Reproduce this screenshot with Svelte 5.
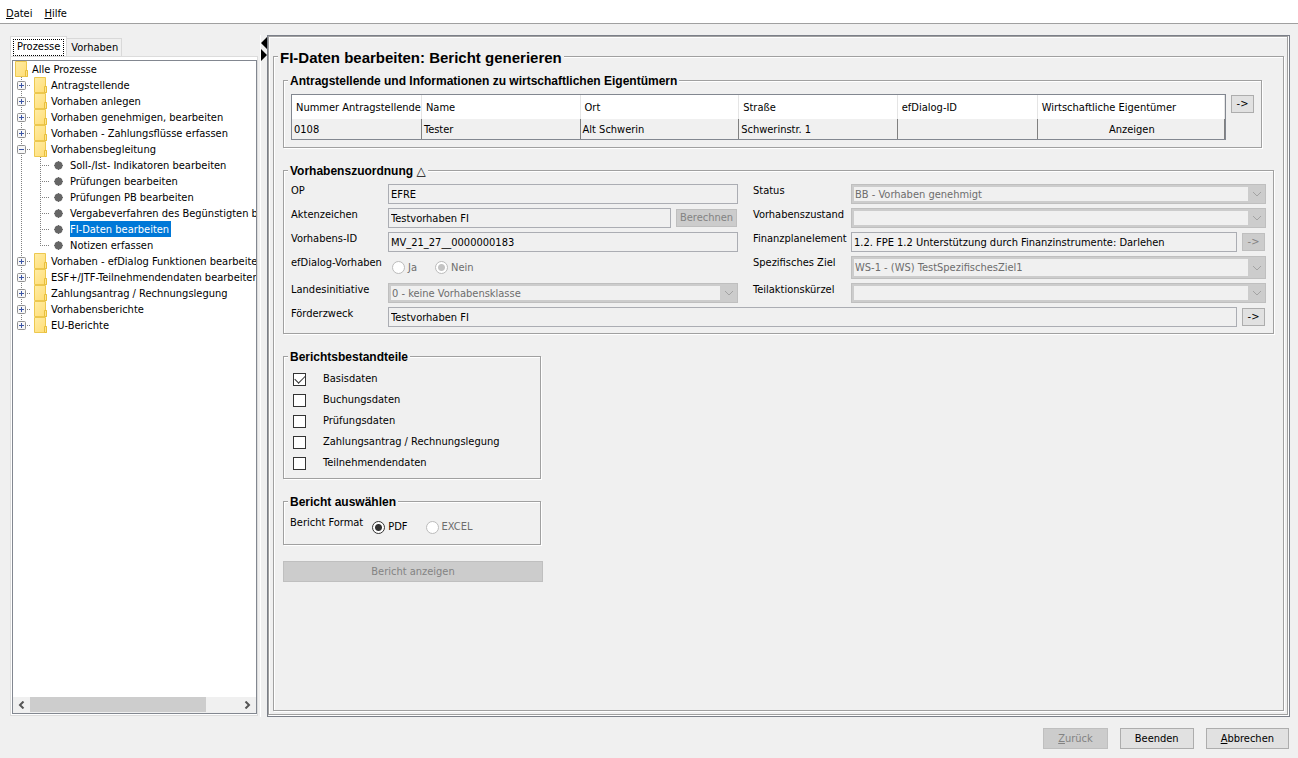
<script>
  const tree = [
    { label: 'Antragstellende' },
    { label: 'Vorhaben anlegen' },
    { label: 'Vorhaben genehmigen, bearbeiten' },
    { label: 'Vorhaben - Zahlungsflüsse erfassen' },
    {
      label: 'Vorhabensbegleitung',
      children: [
        'Soll-/Ist- Indikatoren bearbeiten',
        'Prüfungen bearbeiten',
        'Prüfungen PB bearbeiten',
        'Vergabeverfahren des Begünstigten bearbeiten',
        'FI-Daten bearbeiten',
        'Notizen erfassen'
      ]
    },
    { label: 'Vorhaben - efDialog Funktionen bearbeiten' },
    { label: 'ESF+/JTF-Teilnehmendendaten bearbeiten' },
    { label: 'Zahlungsantrag / Rechnungslegung' },
    { label: 'Vorhabensberichte' },
    { label: 'EU-Berichte' }
  ];

  let open = $state({ Vorhabensbegleitung: true });
  let selected = $state('FI-Daten bearbeiten');
  let tab = $state('Prozesse');

  let parts = $state([
    { id: 'basis', label: 'Basisdaten', checked: true },
    { id: 'buchung', label: 'Buchungsdaten', checked: false },
    { id: 'pruefung', label: 'Prüfungsdaten', checked: false },
    { id: 'zahlung', label: 'Zahlungsantrag / Rechnungslegung', checked: false },
    { id: 'teilnehmende', label: 'Teilnehmendendaten', checked: false }
  ]);
</script>

{#snippet folder()}
  <svg class="folder" width="13" height="16" viewBox="0 0 13 16" aria-hidden="true">
    <defs>
      <linearGradient id="paper" x1="0" y1="0" x2="1" y2="1">
        <stop offset="0" stop-color="#ffeda6" />
        <stop offset="1" stop-color="#ffdc73" />
      </linearGradient>
    </defs>
    <path d="M.5 .5h11v9h1v6h-12z" fill="url(#paper)" stroke="#edc84f" />
    <path d="M10.5 15.500V9.500h2v6z" fill="#ffe48c" stroke="#e8bf3c" />
  </svg>
{/snippet}

{#snippet combo(id, value)}
  <span class="combo">
    <select {id} disabled>
      <option>{value}</option>
    </select>
    <svg width="17" height="16" viewBox="0 0 17 16" aria-hidden="true">
      <path d="M5 6l4 4 4-4" fill="none" stroke="#a3a3a3" />
    </svg>
  </span>
{/snippet}

<div class="window">
  <nav class="menubar">
    <a href="#datei"><u>D</u>atei</a>
    <a href="#hilfe"><u>H</u>ilfe</a>
  </nav>

  <div class="body">
    <aside>
      <div class="tabs" role="tablist">
        {#each ['Prozesse', 'Vorhaben'] as name}
          <button class="tab" class:active={tab === name} role="tab" aria-selected={tab === name} onclick={() => (tab = name)}>
            <span>{name}</span>
          </button>
        {/each}
      </div>
      <div class="tabpanel">
        <div class="treebox">
          <div class="tree">
            <div class="node">{@render folder()}<span class="root">Alle Prozesse</span></div>
            <ul>
              {#each tree as item}
                <li>
                  <div class="node">
                    <button
                      class="expander"
                      aria-label={item.label}
                      aria-expanded={!!open[item.label]}
                      onclick={() => (open[item.label] = !open[item.label])}
                    >
                      <svg width="9" height="9" viewBox="0 0 9 9" aria-hidden="true">
                        <rect x=".5" y=".5" width="8" height="8" rx="1" fill="#f7f7f7" stroke="#919191" />
                        <path d={open[item.label] ? 'M2 4.500h5' : 'M2 4.500h5M4.500 2v5'} stroke="#3c55a5" />
                      </svg>
                    </button>
                    {@render folder()}
                    <span>{item.label}</span>
                  </div>
                  {#if item.children && open[item.label]}
                    <ul>
                      {#each item.children as child}
                        <li>
                          <div class="node leaf">
                            <svg class="dot" width="13" height="16" viewBox="0 0 13 16" aria-hidden="true">
                              <circle cx="5.500" cy="8.500" r="4" fill="#666" />
                              <path d="M5.500 4v9M1 8.500h9" stroke="#666" />
                            </svg>
                            <button class="entry" class:selected={selected === child} onclick={() => (selected = child)}>{child}</button>
                          </div>
                        </li>
                      {/each}
                    </ul>
                  {/if}
                </li>
              {/each}
            </ul>
          </div>
          <div class="scrollbar">
            <button aria-label="Nach links">
              <svg width="7" height="8" viewBox="0 0 7 8"><path d="M5.500 .5L2 4l3.500 3.500" fill="none" stroke="#555" stroke-width="2" /></svg>
            </button>
            <div class="track"><div class="thumb"></div></div>
            <button aria-label="Nach rechts">
              <svg width="7" height="8" viewBox="0 0 7 8"><path d="M1.500 .5L5 4 1.500 7.500" fill="none" stroke="#555" stroke-width="2" /></svg>
            </button>
          </div>
        </div>
      </div>
    </aside>

    <div class="splitter">
      <svg width="6" height="28" viewBox="0 0 6 28" aria-hidden="true">
        <path d="M6 2v12L0 8zM0 14v12l6-6z" />
      </svg>
    </div>

    <main>
      <div class="pane etched">
        <fieldset class="outer etched">
          <legend class="title">FI-Daten bearbeiten: Bericht generieren</legend>
          <div class="content">
            <fieldset class="applicants etched">
              <legend>Antragstellende und Informationen zu wirtschaftlichen Eigentümern</legend>
              <div class="applicants-row">
                <table>
                  <thead>
                    <tr>
                      <th class="nr">Nummer Antragstellende</th>
                      <th class="mid">Name</th>
                      <th class="mid">Ort</th>
                      <th class="mid">Straße</th>
                      <th class="ef">efDialog-ID</th>
                      <th>Wirtschaftliche Eigentümer</th>
                    </tr>
                  </thead>
                  <tbody>
                    <tr>
                      <td>0108</td>
                      <td>Tester</td>
                      <td>Alt Schwerin</td>
                      <td>Schwerinstr. 1</td>
                      <td></td>
                      <td class="center">Anzeigen</td>
                    </tr>
                  </tbody>
                </table>
                <button class="btn arrow">-&gt;</button>
              </div>
            </fieldset>

            <fieldset class="etched">
              <legend>Vorhabenszuordnung <span class="fold">△</span></legend>
              <div class="form">
                <label for="op">OP</label>
                <div class="field"><input id="op" type="text" value="EFRE" readonly /></div>
                <label class="second" for="status">Status</label>
                {@render combo('status', 'BB - Vorhaben genehmigt')}

                <label for="az">Aktenzeichen</label>
                <div class="field with-btn">
                  <input id="az" type="text" value="Testvorhaben FI" readonly />
                  <button class="btn calc" disabled>Berechnen</button>
                </div>
                <label class="second" for="zustand">Vorhabenszustand</label>
                {@render combo('zustand', '')}

                <label for="vid">Vorhabens-ID</label>
                <div class="field"><input id="vid" type="text" value="MV_21_27__0000000183" readonly /></div>
                <label class="second" for="fpe">Finanzplanelement</label>
                <div class="field with-btn">
                  <input id="fpe" type="text" value="1.2. FPE 1.2 Unterstützung durch Finanzinstrumente: Darlehen" readonly />
                  <button class="btn arrow" disabled>-&gt;</button>
                </div>

                <span class="caption">efDialog-Vorhaben</span>
                <div class="radios">
                  <label><input type="radio" name="efdialog" disabled />Ja</label>
                  <label><input type="radio" name="efdialog" checked disabled />Nein</label>
                </div>
                <label class="second" for="ziel">Spezifisches Ziel</label>
                {@render combo('ziel', 'WS-1 - (WS) TestSpezifischesZiel1')}

                <label for="initiative">Landesinitiative</label>
                {@render combo('initiative', '0 - keine Vorhabensklasse')}
                <label class="second" for="kuerzel">Teilaktionskürzel</label>
                {@render combo('kuerzel', '')}

                <label for="zweck">Förderzweck</label>
                <div class="field with-btn wide">
                  <input id="zweck" type="text" value="Testvorhaben FI" readonly />
                  <button class="btn arrow">-&gt;</button>
                </div>
              </div>
            </fieldset>

            <fieldset class="narrow etched">
              <legend>Berichtsbestandteile</legend>
              <div class="checks">
                {#each parts as part}
                  <div class="check">
                    <input type="checkbox" id={part.id} bind:checked={part.checked} />
                    <label for={part.id}>{part.label}</label>
                  </div>
                {/each}
              </div>
            </fieldset>

            <fieldset class="narrow etched">
              <legend>Bericht auswählen</legend>
              <div class="format">
                <span class="caption">Bericht Format</span>
                <div class="radios">
                  <label><input type="radio" name="format" checked />PDF</label>
                  <label><input type="radio" name="format" disabled />EXCEL</label>
                </div>
              </div>
            </fieldset>

            <button class="btn show" disabled>Bericht anzeigen</button>
          </div>
        </fieldset>
      </div>
    </main>
  </div>

  <footer>
    <button class="btn" disabled><u>Z</u>urück</button>
    <button class="btn">Beenden</button>
    <button class="btn"><u>A</u>bbrechen</button>
  </footer>
</div>

<style>
  :global(body) {
    background: #f0f0f0;
  }

  .window {
    box-sizing: border-box;
    display: flex;
    flex-direction: column;
    min-height: 100vh;
    color: #000;
    font: 11px/14px 'DejaVu Sans Condensed', 'DejaVu Sans', sans-serif;
  }

  .window :global(*) {
    box-sizing: border-box;
  }

  button,
  input,
  select {
    margin: 0;
    padding: 0;
    font: inherit;
    color: inherit;
  }

  svg {
    display: block;
    flex: none;
  }

  .menubar {
    display: flex;
    gap: 12px;
    height: 24px;
    padding: 7px 6px 0;
    background: #fff;
    border-bottom: 1px solid #a0a0a0;
  }

  .menubar a {
    color: inherit;
    text-decoration: none;
  }

  .body {
    flex: 1;
    display: flex;
    padding: 11px 8px 0 10px;
  }

  /* left side */
  aside {
    flex: none;
    display: flex;
    flex-direction: column;
    width: 248px;
    padding: 1px 0;
  }

  .tabs {
    display: flex;
    align-items: flex-end;
  }

  .tab {
    height: 18px;
    padding: 0 3px 0 4px;
    background: #f0f0f0;
    border: 1px solid #d9d9d9;
    border-width: 1px 1px 0 0;
  }

  .tab.active {
    height: 21px;
    margin-bottom: -1px;
    padding: 2px;
    background: #fff;
    border-left-width: 1px;
  }

  .tab.active span {
    display: block;
    padding: 0 3px 1px;
    border: 1px dotted #000;
  }

  .tabpanel {
    flex: 1;
    display: flex;
    padding: 3px 0 1px 1px;
    background: #fff;
    border: 1px solid #dcdcdc;
  }

  .treebox {
    flex: 1;
    display: flex;
    flex-direction: column;
    min-width: 0;
    border: 1px solid #828790;
  }

  .tree {
    flex: 1;
    padding: 0 0 0 2px;
    overflow: hidden;
    white-space: nowrap;
  }

  .tree ul {
    margin: 0;
    padding: 0;
    list-style: none;
  }

  .tree ul ul {
    padding-left: 19px;
  }

  .tree li {
    position: relative;
  }

  .tree li::before {
    content: '';
    position: absolute;
    top: 0;
    bottom: 0;
    left: 6px;
    width: 1px;
    background: repeating-linear-gradient(#808080 0 1px, transparent 1px 2px);
  }

  .tree li:last-child::before {
    bottom: 8px;
  }

  .node {
    display: flex;
    align-items: center;
    gap: 4px;
    height: 16px;
  }

  .node span {
    padding-top: 1px;
  }

  .expander {
    flex: none;
    position: relative;
    width: 19px;
    height: 16px;
    margin-right: -4px;
    padding: 0 0 0 2px;
    background: repeating-linear-gradient(90deg, #808080 0 1px, transparent 1px 2px) 12px 8px / 4px 1px no-repeat;
    border: 0;
  }

  .leaf {
    padding-left: 19px;
    background: repeating-linear-gradient(90deg, #808080 0 1px, transparent 1px 2px) 6px 8px / 10px 1px no-repeat;
  }

  .entry {
    height: 16px;
    padding: 1px 2px 0 0;
    background: none;
    border: 0;
  }

  .entry.selected {
    color: #fff;
    background: #0078d7;
  }

  .scrollbar {
    display: flex;
    height: 16px;
    padding-bottom: 1px;
    background: #f0f0f0;
  }

  .scrollbar button {
    display: grid;
    place-items: center;
    width: 17px;
    background: none;
    border: 0;
  }

  .track {
    flex: 1;
  }

  .thumb {
    width: 84%;
    height: 100%;
    background: #cdcdcd;
  }

  .splitter {
    flex: none;
    width: 7px;
    margin-left: 2px;
    border-left: 1px solid #fff;
  }

  /* right side */
  main {
    flex: 1;
    display: flex;
    min-width: 0;
    padding: 0 1px 1px 0;
    border: 1px solid #7b7f88;
  }

  .etched {
    border: 1px solid #a0a0a0;
    box-shadow: inset 1px 1px #fff, 1px 1px #fff;
  }

  .pane {
    flex: 1;
    display: flex;
    min-width: 0;
    padding: 8px 3px 3px 4px;
  }

  fieldset {
    min-width: 0;
    margin: 0;
    padding: 0;
  }

  .outer {
    flex: 1;
  }

  legend {
    margin-left: 4px;
    padding: 2px 2px 0;
    background: #f0f0f0;
    font: bold 12px/14px 'Liberation Sans', Arial, sans-serif;
  }

  legend.title {
    padding-top: 4px;
    font-size: 15px;
    line-height: 18px;
  }

  .fold {
    font-family: 'DejaVu Sans', sans-serif;
  }

  .content {
    display: flex;
    flex-direction: column;
    gap: 14px;
    padding: 5px 9px;
  }

  .applicants {
    margin-right: 12px;
  }

  .applicants-row {
    display: flex;
    align-items: flex-start;
    gap: 5px;
    padding: 6px 7px 7px;
  }

  table {
    flex: 1;
    table-layout: fixed;
    border: 1px solid #828790;
    border-collapse: separate;
    border-spacing: 0;
  }

  th {
    height: 24px;
    padding: 2px 0 0 4px;
    background: #fff;
    border-right: 1px solid #e5e5e5;
    font-weight: normal;
    text-align: left;
    white-space: nowrap;
  }

  td {
    height: 20px;
    padding: 1px 0 0 2px;
    border-right: 1px solid #808080;
  }

  .nr {
    width: 129px;
  }

  .mid {
    width: 17%;
  }

  .ef {
    width: 15%;
  }

  .center {
    text-align: center;
  }

  .btn {
    height: 21px;
    padding: 0 14px;
    background: #e1e1e1;
    border: 1px solid #adadad;
    line-height: 14px;
  }

  .btn:disabled {
    color: #838383;
    background: #ccc;
    border-color: #bfbfbf;
  }

  .btn.arrow {
    flex: none;
    width: 23px;
    height: 18px;
    padding: 0;
  }

  .applicants-row .btn {
    margin-top: 1px;
  }

  .btn.calc {
    flex: none;
    width: 61px;
    height: 18px;
    padding: 0;
  }

  .form {
    display: grid;
    grid-template-columns: 97px 350fr 113px 415fr;
    grid-template-rows: 20px 20px 20px 23px 20px 20px;
    gap: 4px 0;
    padding: 6px 7px;
  }

  .second {
    padding-left: 15px;
  }

  .field {
    display: flex;
    align-items: center;
    gap: 5px;
    min-width: 0;
  }

  .with-btn {
    padding-right: 1px;
  }

  .wide {
    grid-column: 2 / -1;
  }

  .field input {
    flex: 1;
    min-width: 0;
    height: 20px;
    padding: 0 2px;
    background: #f0f0f0;
    border: 1px solid #abadb3;
    border-radius: 0;
    outline: 0;
  }

  .combo {
    display: flex;
    align-items: center;
    min-width: 0;
    padding: 2px 0 2px 2px;
    background: #ccc;
    border: 1px solid #bfbfbf;
  }

  .combo select {
    appearance: none;
    flex: 1;
    align-self: stretch;
    min-width: 0;
    padding: 1px 1px 0;
    color: #6d6d6d;
    background: #f0f0f0;
    border: 0;
    border-radius: 0;
    opacity: 1;
  }

  .radios {
    display: flex;
    align-items: center;
    gap: 18px;
    padding-left: 4px;
  }

  .radios label {
    display: flex;
    align-items: center;
    gap: 3px;
  }

  .radios label:has(:disabled) {
    color: #6d6d6d;
  }

  input[type='radio'] {
    appearance: none;
    width: 13px;
    height: 13px;
    background: #fff;
    border: 1px solid #333;
    border-radius: 50%;
  }

  input[type='radio']:checked {
    background: radial-gradient(circle, #333 0 3px, #fff 4px);
  }

  input[type='radio']:disabled {
    border-color: #bcbcbc;
  }

  input[type='radio']:disabled:checked {
    background: radial-gradient(circle, #c4c4c4 0 3px, #fff 4px);
  }

  .narrow {
    width: 258px;
  }

  .checks {
    padding: 5px 9px 4px;
  }

  .check {
    display: flex;
    align-items: center;
    gap: 17px;
    height: 21px;
  }

  .check label {
    padding-bottom: 2px;
  }

  input[type='checkbox'] {
    appearance: none;
    display: grid;
    place-items: center;
    width: 13px;
    height: 13px;
    background: #fff;
    border: 1px solid #333;
  }

  input[type='checkbox']:checked::before {
    content: '';
    width: 9px;
    height: 5px;
    margin-bottom: 3px;
    border: solid #333;
    border-width: 0 0 1px 1px;
    transform: rotate(-45deg);
  }

  .format {
    display: flex;
    gap: 9px;
    padding: 7px 6px 10px;
  }

  .format .radios {
    padding-top: 4px;
    padding-left: 0;
  }

  .show {
    width: 260px;
    margin-top: 2px;
  }

  footer {
    display: flex;
    justify-content: flex-end;
    gap: 12px;
    padding: 11px 9px 9px;
  }
</style>
